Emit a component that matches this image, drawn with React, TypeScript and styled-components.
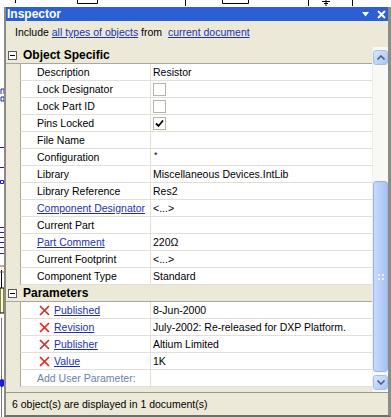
import React from 'react';
import styled, { createGlobalStyle } from 'styled-components';

const GlobalStyle = createGlobalStyle`
  html, body {
    margin: 0;
    padding: 0;
    background: #ffffff;
  }
  body {
    font-family: 'Liberation Sans', Arial, sans-serif;
    font-size: 10.5px;
    color: #000000;
  }
`;

const BEIGE = '#ECE9D8';
const LINK = '#1C32B4';

const Page = styled.div`
  position: relative;
  width: 391px;
  height: 417px;
  overflow: hidden;
  background: #ffffff;
  padding: 7px 0 0 4px;
  box-sizing: border-box;
`;

const Canvas = styled.svg`
  position: absolute;
  left: 0;
  top: 0;
`;

const Panel = styled.div`
  position: relative;
  width: 387px;
  height: 410px;
  box-sizing: border-box;
  border-left: 2px solid #8d8b82;
  border-right: 3px solid #8d8b82;
  border-bottom: 2px solid #6f6e68;
  background: ${BEIGE};
  display: flex;
  flex-direction: column;
`;

const TitleBar = styled.div`
  height: 14px;
  background: #2a5fd6;
  color: #ffffff;
  display: flex;
  align-items: center;
  padding: 0 2px 0 1px;
`;

const Title = styled.span`
  font-weight: bold;
  font-size: 12px;
  flex: 1;
  line-height: 14px;
`;

const TitleButtons = styled.div`
  display: flex;
  align-items: center;
  gap: 8px;
`;

const IncludeBar = styled.div`
  height: 26px;
  box-sizing: border-box;
  padding: 0 0 4px 9px;
  display: flex;
  align-items: center;
  white-space: pre;
`;

const Link = styled.span`
  color: ${LINK};
  text-decoration: underline;
`;

const Body = styled.div`
  display: flex;
  height: 345px;
`;

const List = styled.div`
  flex: 1;
  display: flex;
  flex-direction: column;
`;

const SectionHeader = styled.div`
  height: 17px;
  box-sizing: border-box;
  display: flex;
  align-items: center;
  gap: 6px;
  padding-left: 2px;
  font-weight: bold;
  font-size: 12px;
  border-bottom: 1px solid #a9a79c;
`;

const Collapse = styled.span`
  width: 9px;
  height: 9px;
  box-sizing: border-box;
  border: 1px solid #5a5a5a;
  background: #ffffff;
  position: relative;
  &::after {
    content: '';
    position: absolute;
    left: 1px;
    right: 1px;
    top: 3px;
    height: 1px;
    background: #000000;
  }
`;

const Row = styled.div`
  display: grid;
  grid-template-columns: 14px 130px 1fr;
  height: 17px;
`;

const Gutter = styled.div`
  background: ${BEIGE};
`;

const Cell = styled.div<{ $pad: number }>`
  background: #ffffff;
  border-left: 1px solid ${(p) => (p.$pad > 10 ? '#a9a79c' : '#e2e0d6')};
  border-bottom: 1px solid #e2e0d6;
  box-sizing: border-box;
  display: flex;
  align-items: center;
  gap: 4px;
  padding-left: ${(p) => p.$pad}px;
  white-space: nowrap;
  overflow: hidden;
  line-height: 16px;
`;

const NameLink = styled.span`
  color: ${LINK};
  text-decoration: underline;
`;

const AddParam = styled.span`
  color: #6a83b0;
`;

const Check = styled.span`
  width: 13px;
  height: 13px;
  box-sizing: border-box;
  border: 1px solid #b7b5aa;
  background: #ffffff;
  display: flex;
  align-items: center;
  justify-content: center;
`;

const Star = styled.span`
  font-size: 9px;
  line-height: 9px;
  align-self: flex-start;
  margin-top: 2px;
  padding-left: 1px;
`;

const Filler = styled.div`
  flex: 1;
  background: ${BEIGE};
`;

const ScrollBar = styled.div`
  width: 16px;
  background: #f8f8f4;
  border-left: 1px solid #efeee8;
  box-sizing: border-box;
  display: flex;
  flex-direction: column;
  align-items: center;
  padding: 3px 0 0;
`;

const ScrollButton = styled.div`
  width: 15px;
  height: 15px;
  box-sizing: border-box;
  border: 1px solid #a7bff0;
  border-radius: 3px;
  background: linear-gradient(135deg, #dce7fd 0%, #c1d4fb 50%, #abc3f5 100%);
  display: flex;
  align-items: center;
  justify-content: center;
`;

const Track = styled.div<{ $h: number }>`
  height: ${(p) => p.$h}px;
`;

const Thumb = styled.div`
  width: 15px;
  height: 191px;
  box-sizing: border-box;
  border: 1px solid #98b3e8;
  border-radius: 3px;
  background: linear-gradient(90deg, #c9dafc 0%, #b9cefb 45%, #a9c2f4 100%);
  display: flex;
  align-items: center;
  justify-content: center;
`;

const StatusBar = styled.div`
  flex: 1;
  border-top: 1px solid #9b998e;
  display: flex;
  align-items: center;
  padding-left: 6px;
`;

const RedX = () => (
  <svg width="11" height="11" viewBox="0 0 11 11">
    <path d="M1 1 L10 10 M10 1 L1 10" stroke="#e02a1f" strokeWidth="1.7" />
  </svg>
);

const CheckMark = () => (
  <svg width="9" height="9" viewBox="0 0 9 9">
    <path d="M1 4.5 L3.5 7 L8 1.5" stroke="#000" strokeWidth="1.8" fill="none" />
  </svg>
);

type Item = {
  name: string;
  value?: React.ReactNode;
  link?: boolean;
  param?: boolean;
};

const objectRows: Item[] = [
  { name: 'Description', value: 'Resistor' },
  { name: 'Lock Designator', value: <Check /> },
  { name: 'Lock Part ID', value: <Check /> },
  { name: 'Pins Locked', value: <Check><CheckMark /></Check> },
  { name: 'File Name' },
  { name: 'Configuration', value: <Star>*</Star> },
  { name: 'Library', value: 'Miscellaneous Devices.IntLib' },
  { name: 'Library Reference', value: 'Res2' },
  { name: 'Component Designator', value: '<...>', link: true },
  { name: 'Current Part' },
  { name: 'Part Comment', value: '220Ω', link: true },
  { name: 'Current Footprint', value: '<...>' },
  { name: 'Component Type', value: 'Standard' },
];

const paramRows: Item[] = [
  { name: 'Published', value: '8-Jun-2000', param: true },
  { name: 'Revision', value: 'July-2002: Re-released for DXP Platform.', param: true },
  { name: 'Publisher', value: 'Altium Limited', param: true },
  { name: 'Value', value: '1K', param: true },
];

const PropRow = ({ item }: { item: Item }) => (
  <Row>
    <Gutter />
    <Cell $pad={item.param ? 18 : 16}>
      {item.param && <RedX />}
      {item.link || item.param ? <NameLink>{item.name}</NameLink> : item.name}
    </Cell>
    <Cell $pad={2}>{item.value}</Cell>
  </Row>
);

const Schematic = () => (
  <Canvas width="391" height="417" viewBox="0 0 391 417">
    <g stroke="#000" strokeWidth="1" fill="none">
      <path d="M15.5 0 V3" />
      <path d="M77.5 0 V3.5 H97.5 V0" />
      <path d="M185.5 0 V6" />
      <path d="M222.5 0 V3.5 H248.5 V0" />
      <path d="M308.5 0 V6" />
      <path d="M322 1.5 H330 M324 3.5 H328 M326 0 V6" />
      <path d="M352.5 0 V6" />
      <path d="M1.5 270 V292" />
      <path d="M1.5 318 V417" stroke="#777" />
    </g>
    <g stroke="#1a1ad8" strokeWidth="1" fill="none">
      <path d="M1 89 H4 M1 89 V94 M4 89 V94" />
      <path d="M1 97 H4 V101 H1 Z" />
      <path d="M0 147.5 H4" />
      <path d="M0 167.5 H4" />
      <path d="M0.5 180.5 H3.5 V183.5 H0.5 Z" />
      <path d="M0 227.5 H4 M0 232.5 H4 M0 237.5 H4 M0 242.5 H4 M0 247.5 H4 M0 253.5 H4" />
    </g>
    <path d="M0 266 H4 M0 272 H4" stroke="#a0522d" strokeWidth="1" />
    <rect x="0" y="288" width="4" height="25" fill="#ffffc0" stroke="#000" strokeWidth="1" />
    <ellipse cx="2" cy="383" rx="2.5" ry="4" fill="#1a1ae0" />
  </Canvas>
);

export default function App() {
  return (
    <>
      <GlobalStyle />
      <Page>
        <Schematic />
        <Panel>
          <TitleBar>
            <Title>Inspector</Title>
            <TitleButtons>
              <svg width="7" height="5" viewBox="0 0 7 5">
                <path d="M0 0 H7 L3.5 4.5 Z" fill="#ffffff" />
              </svg>
              <svg width="9" height="9" viewBox="0 0 9 9">
                <path d="M1 1 L8 8 M8 1 L1 8" stroke="#ffffff" strokeWidth="2" />
              </svg>
            </TitleButtons>
          </TitleBar>
          <IncludeBar>
            Include <Link>all types of objects</Link> from  <Link>current document</Link>
          </IncludeBar>
          <Body>
            <List>
              <SectionHeader>
                <Collapse />
                Object Specific
              </SectionHeader>
              {objectRows.map((r) => (
                <PropRow key={r.name} item={r} />
              ))}
              <SectionHeader>
                <Collapse />
                Parameters
              </SectionHeader>
              {paramRows.map((r) => (
                <PropRow key={r.name} item={r} />
              ))}
              <Row>
                <Gutter />
                <Cell $pad={16}>
                  <AddParam>Add User Parameter:</AddParam>
                </Cell>
                <Cell $pad={2} />
              </Row>
              <Filler />
            </List>
            <ScrollBar>
              <ScrollButton>
                <svg width="8" height="5" viewBox="0 0 8 5">
                  <path d="M0.5 4.5 L4 1 L7.5 4.5" stroke="#4d6185" strokeWidth="1.6" fill="none" />
                </svg>
              </ScrollButton>
              <Track $h={116} />
              <Thumb>
                <svg width="6" height="6" viewBox="0 0 6 6">
                  <g fill="#eef3fe">
                    <rect x="0" y="0" width="2" height="2" />
                    <rect x="4" y="0" width="2" height="2" />
                    <rect x="0" y="4" width="2" height="2" />
                    <rect x="4" y="4" width="2" height="2" />
                  </g>
                </svg>
              </Thumb>
              <Track $h={3} />
              <ScrollButton>
                <svg width="8" height="5" viewBox="0 0 8 5">
                  <path d="M0.5 0.5 L4 4 L7.5 0.5" stroke="#4d6185" strokeWidth="1.6" fill="none" />
                </svg>
              </ScrollButton>
            </ScrollBar>
          </Body>
          <StatusBar>6 object(s) are displayed in 1 document(s)</StatusBar>
        </Panel>
      </Page>
    </>
  );
}
